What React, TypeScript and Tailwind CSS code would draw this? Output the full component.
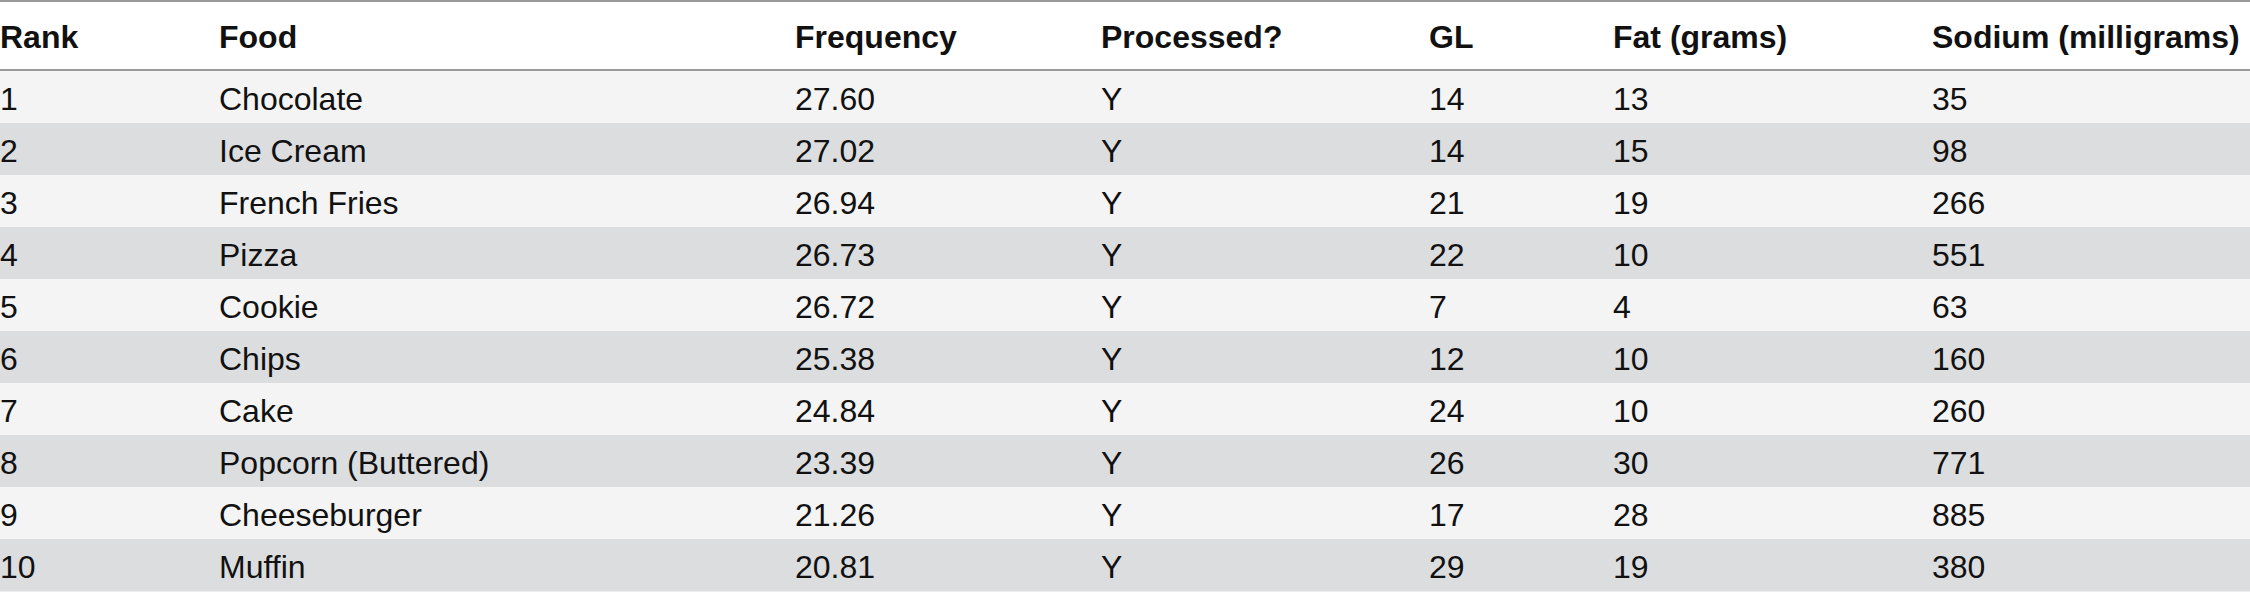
const HEADERS = ['Rank', 'Food', 'Frequency', 'Processed?', 'GL', 'Fat (grams)', 'Sodium (milligrams)'];

const ROWS: string[][] = [
  ['1', 'Chocolate', '27.60', 'Y', '14', '13', '35'],
  ['2', 'Ice Cream', '27.02', 'Y', '14', '15', '98'],
  ['3', 'French Fries', '26.94', 'Y', '21', '19', '266'],
  ['4', 'Pizza', '26.73', 'Y', '22', '10', '551'],
  ['5', 'Cookie', '26.72', 'Y', '7', '4', '63'],
  ['6', 'Chips', '25.38', 'Y', '12', '10', '160'],
  ['7', 'Cake', '24.84', 'Y', '24', '10', '260'],
  ['8', 'Popcorn (Buttered)', '23.39', 'Y', '26', '30', '771'],
  ['9', 'Cheeseburger', '21.26', 'Y', '17', '28', '885'],
  ['10', 'Muffin', '20.81', 'Y', '29', '19', '380'],
];

const COLS = 'grid grid-cols-[219px_576px_306px_328px_184px_319px_1fr]';

export default function App() {
  return (
    <div className="w-[2250px] h-[592px] bg-white text-[#111] font-['Liberation_Sans',Arial,sans-serif] text-[32px] leading-none overflow-hidden">
      <div className="border-t-2 border-b-2 border-[#9a9a9a]">
        <div className={`${COLS} h-[67px] items-center font-bold`}>
          {HEADERS.map((h) => (
            <div key={h} className="pt-[2px] whitespace-nowrap">{h}</div>
          ))}
        </div>
      </div>
      <div className="border-b border-[#eeeeee]">
        {ROWS.map((row, i) => (
          <div
            key={row[0]}
            className={`${COLS} h-[52px] items-center ${i % 2 === 0 ? 'bg-[#f4f4f4]' : 'bg-[#dcdddf]'}`}
          >
            {row.map((cell, j) => (
              <div key={j} className="pt-[3px] whitespace-nowrap">{cell}</div>
            ))}
          </div>
        ))}
      </div>
    </div>
  );
}
